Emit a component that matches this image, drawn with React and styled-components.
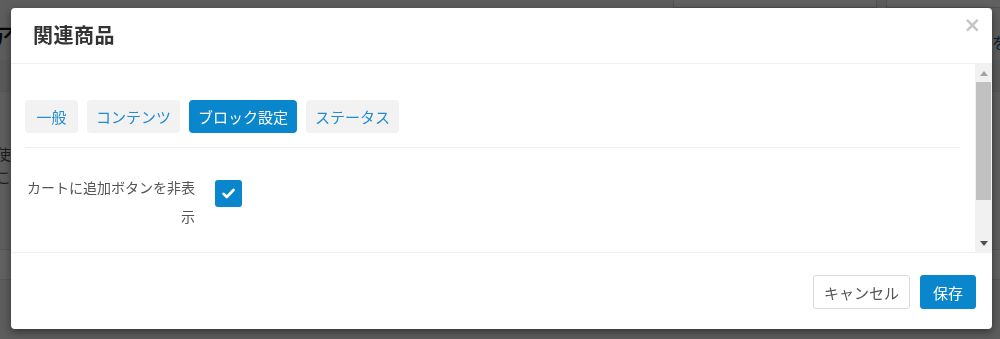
import React from "react";
import styled, { createGlobalStyle } from "styled-components";

const Global = createGlobalStyle`
  html, body { margin: 0; padding: 0; }
  body {
    width: 1000px;
    height: 339px;
    overflow: hidden;
    font-family: "Noto Sans CJK JP", "Noto Sans", sans-serif;
    background: #ffffff;
  }
  * { box-sizing: border-box; }
`;

/* ---------- page beneath the dialog ---------- */
const UnderPage = styled.div`
  width: 1000px;
  height: 339px;
  background: #f4f4f4;
  display: flex;
  flex-direction: column;
`;

const UnderTop = styled.div`
  height: 60px;
  display: flex;
  align-items: flex-start;
  justify-content: space-between;
`;

const UnderTitle = styled.div`
  font-size: 30px;
  color: #111;
  margin-left: -14px;
  margin-top: 18px;
  line-height: 36px;
`;

const UnderTools = styled.div`
  display: flex;
  gap: 9px;
  margin-right: -6px;
`;

const UnderBox = styled.div`
  width: ${(p) => p.$w}px;
  height: 8px;
  border: 1px solid #d6d6d6;
  border-top: none;
  background: #fff;
`;

const UnderSide = styled.div`
  position: absolute;
  right: 0;
  top: 30px;
  font-size: 16px;
  color: #1b4f7a;
  margin-right: -8px;
`;

const UnderBand = styled.div`
  height: ${(p) => p.$h}px;
  background: ${(p) => p.$bg};
  border-bottom: 1px solid #e2e2e2;
  padding-top: ${(p) => p.$pt || 0}px;
  font-size: 15px;
  color: #555;
  line-height: 23px;
`;

const UnderText = styled.div`
  margin-left: -4px;
`;

const Overlay = styled.div`
  position: fixed;
  inset: 0;
  background: rgba(0, 0, 0, 0.62);
`;

/* ---------- dialog ---------- */
const Modal = styled.div`
  position: fixed;
  left: 11px;
  top: 8px;
  width: 981px;
  height: 321px;
  background: #fff;
  border-radius: 4px;
  box-shadow: 0 3px 9px rgba(0, 0, 0, 0.45);
  display: flex;
  flex-direction: column;
  overflow: hidden;
`;

const Header = styled.div`
  height: 56px;
  flex: none;
  display: flex;
  align-items: center;
  justify-content: space-between;
  padding: 0 11px 0 22px;
  border-bottom: 1px solid #f0f0f0;
`;

const Title = styled.h4`
  margin: 0;
  font-size: 20px;
  font-weight: 700;
  color: #333;
  letter-spacing: 0.5px;
  margin-top: -2px;
`;

const Close = styled.button`
  border: none;
  background: none;
  padding: 0;
  font-family: "DejaVu Sans", sans-serif;
  font-size: 21px;
  font-weight: 700;
  line-height: 1;
  color: #c6c6c6;
  align-self: flex-start;
  margin-top: 7px;
  cursor: pointer;
`;

const BodyWrap = styled.div`
  height: 189px;
  flex: none;
  display: flex;
  border-bottom: 1px solid #f0f0f0;
`;

const Body = styled.div`
  flex: 1;
  padding: 36px 15px 0 14px;
  overflow: hidden;
`;

const Tabs = styled.div`
  display: flex;
  gap: 9px;
  padding-bottom: 14px;
  border-bottom: 1px solid #edf1f5;
`;

const Tab = styled.button`
  height: 33px;
  min-width: 53px;
  padding: 0 9px;
  border: none;
  border-radius: 4px;
  font-family: "Noto Sans CJK JP", sans-serif;
  font-size: 15px;
  line-height: 33px;
  background: ${(p) => (p.$active ? "#0a87cc" : "#f2f2f2")};
  color: ${(p) => (p.$active ? "#ffffff" : "#238ccd")};
  cursor: pointer;
`;

const FormRow = styled.div`
  display: flex;
  align-items: flex-start;
  gap: 20px;
  padding-top: 32px;
`;

const Label = styled.label`
  width: 170px;
  text-align: right;
  font-size: 14px;
  line-height: 29px;
  color: #555;
  margin-top: -7px;
`;

const CheckBox = styled.span`
  width: 27px;
  height: 27px;
  border-radius: 3px;
  background: #0a87cc;
  display: flex;
  align-items: center;
  justify-content: center;
`;

const Scrollbar = styled.div`
  width: 17px;
  flex: none;
  background: #f1f1f1;
  display: flex;
  flex-direction: column;
`;

const ScrollArrow = styled.div`
  height: 18px;
  display: flex;
  align-items: center;
  justify-content: center;
`;

const ScrollTrack = styled.div`
  flex: 1;
  display: flex;
  flex-direction: column;
  padding: 0 1px;
`;

const Thumb = styled.div`
  height: 118px;
  background: #c1c1c1;
`;

const Footer = styled.div`
  flex: 1;
  display: flex;
  justify-content: flex-end;
  align-items: flex-start;
  gap: 10px;
  padding: 22px 16px 0 0;
`;

const Button = styled.button`
  height: 34px;
  padding: 0 ${(p) => (p.$primary ? 12 : 10)}px;
  border-radius: 3px;
  font-family: "Noto Sans CJK JP", sans-serif;
  font-size: 15px;
  border: 1px solid ${(p) => (p.$primary ? "#0a87cc" : "#dcdcdc")};
  background: ${(p) => (p.$primary ? "#0a87cc" : "#ffffff")};
  color: ${(p) => (p.$primary ? "#ffffff" : "#555")};
  cursor: pointer;
`;

const tabs = ["一般", "コンテンツ", "ブロック設定", "ステータス"];

export default function App() {
  return (
    <>
      <Global />
      <UnderPage>
        <UnderTop>
          <UnderTitle>ア</UnderTitle>
          <UnderTools>
            <UnderBox $w={204} />
            <UnderBox $w={120} />
          </UnderTools>
        </UnderTop>
        <UnderSide>を</UnderSide>
        <UnderBand $h={32} $bg="#ebebeb" />
        <UnderBand $h={158} $bg="#f7f7f7" $pt={50}>
          <UnderText>使</UnderText>
          <UnderText>こ</UnderText>
        </UnderBand>
        <UnderBand $h={30} $bg="#ffffff" />
      </UnderPage>
      <Overlay />
      <Modal role="dialog">
        <Header>
          <Title>関連商品</Title>
          <Close aria-label="close">×</Close>
        </Header>
        <BodyWrap>
          <Body>
            <Tabs>
              {tabs.map((t) => (
                <Tab key={t} $active={t === "ブロック設定"}>
                  {t}
                </Tab>
              ))}
            </Tabs>
            <FormRow>
              <Label>カートに追加ボタンを非表示</Label>
              <CheckBox>
                <svg width="13" height="11" viewBox="0 0 13 11">
                  <path
                    d="M1.5 5.8 L4.8 9 L11.5 2"
                    fill="none"
                    stroke="#fff"
                    strokeWidth="2.6"
                    strokeLinecap="round"
                    strokeLinejoin="round"
                  />
                </svg>
              </CheckBox>
            </FormRow>
          </Body>
          <Scrollbar>
            <ScrollArrow>
              <svg width="8" height="5" viewBox="0 0 8 5">
                <path d="M0 5 L4 0 L8 5 Z" fill="#a3a3a3" />
              </svg>
            </ScrollArrow>
            <ScrollTrack>
              <Thumb />
            </ScrollTrack>
            <ScrollArrow>
              <svg width="8" height="5" viewBox="0 0 8 5">
                <path d="M0 0 L8 0 L4 5 Z" fill="#505050" />
              </svg>
            </ScrollArrow>
          </Scrollbar>
        </BodyWrap>
        <Footer>
          <Button>キャンセル</Button>
          <Button $primary>保存</Button>
        </Footer>
      </Modal>
    </>
  );
}
